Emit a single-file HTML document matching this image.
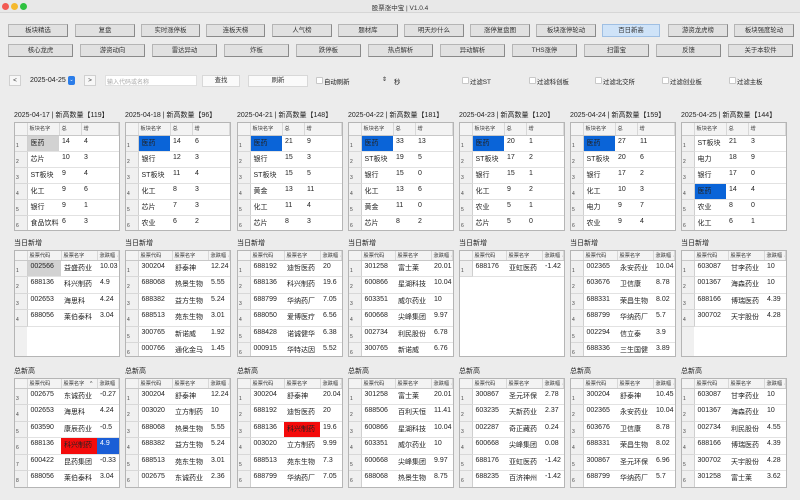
<!DOCTYPE html>
<html><head><meta charset="utf-8">
<style>
*{box-sizing:border-box;margin:0;padding:0}
body{width:800px;height:500px;overflow:hidden;background:#ececec;font-family:"Liberation Sans","Noto Sans CJK SC",sans-serif;color:#222;position:relative}
.tb{position:absolute;left:0;top:0;width:800px;height:13px;background:#e8e8e8;border-bottom:1px solid #d6d6d6}
.tl{position:absolute;top:3px;width:7px;height:7px;border-radius:50%}
.ttl{position:absolute;top:2px;left:0;width:800px;text-align:center;font-size:6.5px;color:#333}
.b{position:absolute;height:13px;background:#e1e1e1;border:1px solid #b5b5b5;border-bottom-color:#8a8a8a;border-right-color:#8a8a8a;font-size:6.4px;text-align:center;line-height:11px;color:#333}
.lbl{position:absolute;font-size:7px;color:#222;white-space:nowrap}
.cb{position:absolute;width:7px;height:7px;background:#fff;border:1px solid #c8c8c8;border-radius:1px}
.tw{position:absolute;width:106px;border:1px solid #b5b5b5;overflow:hidden;background:linear-gradient(90deg,#f0f0f0 0,#f0f0f0 12px,#fff 12px)}
table{border-collapse:collapse;table-layout:fixed;width:104px;font-size:7px}
th{height:12px;background:#f3f3f3;font-weight:normal;font-size:5.2px;text-align:left;padding-left:2px;border-right:1px solid #d8d8d8;border-bottom:1px solid #c8c8c8;color:#333;white-space:nowrap;overflow:hidden}
.m th{height:9px}
td{height:16px;vertical-align:top;padding:2px 0 0 3px;border-bottom:1px solid #e2e2e2;white-space:nowrap;overflow:hidden;background:#fff}
.m td{height:16.5px}
td.n{background:#f0f0f0;border-right:1px solid #cfcfcf;border-bottom:1px solid #d8d8d8;font-size:5px;padding:7px 0 0 1px;color:#444}
.s{background:#0a64d8!important}
.g{background:#d2d2d2!important}
.r{background:#f40b0b!important}
.bl{background:#1b5ed6!important;color:#fff}
</style></head><body>
<div class="tb"></div>
<div class="tl" style="left:2px;background:#f25a52"></div>
<div class="tl" style="left:11px;background:#f5b92d"></div>
<div class="tl" style="left:20px;background:#2fc240"></div>
<div class="ttl">股票涨中宝 | V1.0.4</div>

<div class="b" style="left:8px;top:24px;width:60px">板块精选</div>
<div class="b" style="left:75px;top:24px;width:60px">复盘</div>
<div class="b" style="left:141px;top:24px;width:59px">实时涨停板</div>
<div class="b" style="left:206px;top:24px;width:59px">连板天梯</div>
<div class="b" style="left:272px;top:24px;width:60px">人气榜</div>
<div class="b" style="left:338px;top:24px;width:60px">题材库</div>
<div class="b" style="left:404px;top:24px;width:60px">明天炒什么</div>
<div class="b" style="left:470px;top:24px;width:60px">涨停复盘图</div>
<div class="b" style="left:536px;top:24px;width:60px">板块涨停轮动</div>
<div class="b" style="left:602px;top:24px;width:58px;background:#cfe3f8;border-color:#9fbfe3">百日新高</div>
<div class="b" style="left:668px;top:24px;width:60px">游资龙虎榜</div>
<div class="b" style="left:734px;top:24px;width:60px">板块强度轮动</div>

<div class="b" style="left:8px;top:44px;width:65px">核心龙虎</div>
<div class="b" style="left:80px;top:44px;width:65px">游资动向</div>
<div class="b" style="left:152px;top:44px;width:65px">雷达异动</div>
<div class="b" style="left:224px;top:44px;width:65px">炸板</div>
<div class="b" style="left:296px;top:44px;width:65px">跌停板</div>
<div class="b" style="left:368px;top:44px;width:65px">热点解析</div>
<div class="b" style="left:440px;top:44px;width:65px">异动解析</div>
<div class="b" style="left:512px;top:44px;width:65px">THS涨停</div>
<div class="b" style="left:584px;top:44px;width:65px">扫雷宝</div>
<div class="b" style="left:656px;top:44px;width:65px">反馈</div>
<div class="b" style="left:728px;top:44px;width:65px">关于本软件</div>

<div class="b" style="left:9px;top:75px;width:12px;height:11px;line-height:9px;background:#f7f7f7;border-color:#d0d0d0">&lt;</div>
<div class="lbl" style="left:30px;top:77px">2025-04-25</div>
<div style="position:absolute;left:68px;top:76px;width:7px;height:9px;background:#2b7de9;border-radius:2px;color:#fff;font-size:5px;text-align:center;line-height:9px">⌄</div>
<div class="b" style="left:84px;top:75px;width:12px;height:11px;line-height:9px;background:#f7f7f7;border-color:#d0d0d0">&gt;</div>
<div style="position:absolute;left:105px;top:75px;width:92px;height:11px;background:#fff;border:1px solid #e0e0e0"></div>
<div class="lbl" style="left:107px;top:77px;color:#aaa;font-size:6px">输入代码或名称</div>
<div class="b" style="left:202px;top:75px;width:38px;height:12px;line-height:10px;background:#fafafa;border-color:#d8d8d8">查找</div>
<div class="b" style="left:248px;top:75px;width:60px;height:12px;line-height:10px;background:#fafafa;border-color:#d8d8d8">刷新</div>
<div class="cb" style="left:316px;top:77px"></div><div class="lbl" style="left:324px;top:77px;font-size:6.4px">自动刷新</div>
<div class="lbl" style="left:382px;top:76px;font-size:6px">⇕</div><div class="lbl" style="left:394px;top:77px;font-size:6.4px">秒</div>
<div class="cb" style="left:462px;top:77px"></div><div class="lbl" style="left:470px;top:77px;font-size:6.4px">过滤ST</div>
<div class="cb" style="left:529px;top:77px"></div><div class="lbl" style="left:537px;top:77px;font-size:6.4px">过滤科创板</div>
<div class="cb" style="left:595px;top:77px"></div><div class="lbl" style="left:603px;top:77px;font-size:6.4px">过滤北交所</div>
<div class="cb" style="left:662px;top:77px"></div><div class="lbl" style="left:670px;top:77px;font-size:6.4px">过滤创业板</div>
<div class="cb" style="left:729px;top:77px"></div><div class="lbl" style="left:737px;top:77px;font-size:6.4px">过滤主板</div>

<div class="lbl" style="left:14px;top:110px">2025-04-17 | 新高数量【119】</div>
<div class="lbl" style="left:125px;top:110px">2025-04-18 | 新高数量【96】</div>
<div class="lbl" style="left:237px;top:110px">2025-04-21 | 新高数量【148】</div>
<div class="lbl" style="left:348px;top:110px">2025-04-22 | 新高数量【181】</div>
<div class="lbl" style="left:459px;top:110px">2025-04-23 | 新高数量【120】</div>
<div class="lbl" style="left:570px;top:110px">2025-04-24 | 新高数量【159】</div>
<div class="lbl" style="left:681px;top:110px">2025-04-25 | 新高数量【144】</div>

<div class="tw" style="left:14px;top:122px;height:109px"><table><colgroup><col style="width:12px"><col style="width:32px"><col style="width:22px"><col></colgroup>
<tr><th></th><th>板块名字</th><th>总</th><th>增</th></tr>
<tr><td class="n">1</td><td class="g">医药</td><td>14</td><td>4</td></tr>
<tr><td class="n">2</td><td>芯片</td><td>10</td><td>3</td></tr>
<tr><td class="n">3</td><td>ST板块</td><td>9</td><td>4</td></tr>
<tr><td class="n">4</td><td>化工</td><td>9</td><td>6</td></tr>
<tr><td class="n">5</td><td>银行</td><td>9</td><td>1</td></tr>
<tr><td class="n">6</td><td>食品饮料</td><td>6</td><td>3</td></tr></table></div>

<div class="tw" style="left:125px;top:122px;height:109px"><table><colgroup><col style="width:12px"><col style="width:32px"><col style="width:22px"><col></colgroup>
<tr><th></th><th>板块名字</th><th>总</th><th>增</th></tr>
<tr><td class="n">1</td><td class="s">医药</td><td>14</td><td>6</td></tr>
<tr><td class="n">2</td><td>银行</td><td>12</td><td>3</td></tr>
<tr><td class="n">3</td><td>ST板块</td><td>11</td><td>4</td></tr>
<tr><td class="n">4</td><td>化工</td><td>8</td><td>3</td></tr>
<tr><td class="n">5</td><td>芯片</td><td>7</td><td>3</td></tr>
<tr><td class="n">6</td><td>农业</td><td>6</td><td>2</td></tr></table></div>

<div class="tw" style="left:237px;top:122px;height:109px"><table><colgroup><col style="width:12px"><col style="width:32px"><col style="width:22px"><col></colgroup>
<tr><th></th><th>板块名字</th><th>总</th><th>增</th></tr>
<tr><td class="n">1</td><td class="s">医药</td><td>21</td><td>9</td></tr>
<tr><td class="n">2</td><td>银行</td><td>15</td><td>3</td></tr>
<tr><td class="n">3</td><td>ST板块</td><td>15</td><td>5</td></tr>
<tr><td class="n">4</td><td>黄金</td><td>13</td><td>11</td></tr>
<tr><td class="n">5</td><td>化工</td><td>11</td><td>4</td></tr>
<tr><td class="n">6</td><td>芯片</td><td>8</td><td>3</td></tr></table></div>

<div class="tw" style="left:348px;top:122px;height:109px"><table><colgroup><col style="width:12px"><col style="width:32px"><col style="width:22px"><col></colgroup>
<tr><th></th><th>板块名字</th><th>总</th><th>增</th></tr>
<tr><td class="n">1</td><td class="s">医药</td><td>33</td><td>13</td></tr>
<tr><td class="n">2</td><td>ST板块</td><td>19</td><td>5</td></tr>
<tr><td class="n">3</td><td>银行</td><td>15</td><td>0</td></tr>
<tr><td class="n">4</td><td>化工</td><td>13</td><td>6</td></tr>
<tr><td class="n">5</td><td>黄金</td><td>11</td><td>0</td></tr>
<tr><td class="n">6</td><td>芯片</td><td>8</td><td>2</td></tr></table></div>

<div class="tw" style="left:459px;top:122px;height:109px"><table><colgroup><col style="width:12px"><col style="width:32px"><col style="width:22px"><col></colgroup>
<tr><th></th><th>板块名字</th><th>总</th><th>增</th></tr>
<tr><td class="n">1</td><td class="s">医药</td><td>20</td><td>1</td></tr>
<tr><td class="n">2</td><td>ST板块</td><td>17</td><td>2</td></tr>
<tr><td class="n">3</td><td>银行</td><td>15</td><td>1</td></tr>
<tr><td class="n">4</td><td>化工</td><td>9</td><td>2</td></tr>
<tr><td class="n">5</td><td>农业</td><td>5</td><td>1</td></tr>
<tr><td class="n">6</td><td>芯片</td><td>5</td><td>0</td></tr></table></div>

<div class="tw" style="left:570px;top:122px;height:109px"><table><colgroup><col style="width:12px"><col style="width:32px"><col style="width:22px"><col></colgroup>
<tr><th></th><th>板块名字</th><th>总</th><th>增</th></tr>
<tr><td class="n">1</td><td class="s">医药</td><td>27</td><td>11</td></tr>
<tr><td class="n">2</td><td>ST板块</td><td>20</td><td>6</td></tr>
<tr><td class="n">3</td><td>银行</td><td>17</td><td>2</td></tr>
<tr><td class="n">4</td><td>化工</td><td>10</td><td>3</td></tr>
<tr><td class="n">5</td><td>电力</td><td>9</td><td>7</td></tr>
<tr><td class="n">6</td><td>农业</td><td>9</td><td>4</td></tr></table></div>

<div class="tw" style="left:681px;top:122px;height:109px"><table><colgroup><col style="width:12px"><col style="width:32px"><col style="width:22px"><col></colgroup>
<tr><th></th><th>板块名字</th><th>总</th><th>增</th></tr>
<tr><td class="n">1</td><td>ST板块</td><td>21</td><td>3</td></tr>
<tr><td class="n">2</td><td>电力</td><td>18</td><td>9</td></tr>
<tr><td class="n">3</td><td>银行</td><td>17</td><td>0</td></tr>
<tr><td class="n">4</td><td class="s">医药</td><td>14</td><td>4</td></tr>
<tr><td class="n">5</td><td>农业</td><td>8</td><td>0</td></tr>
<tr><td class="n">6</td><td>化工</td><td>6</td><td>1</td></tr></table></div>

<div class="lbl" style="left:14px;top:238px">当日新增</div>
<div class="lbl" style="left:125px;top:238px">当日新增</div>
<div class="lbl" style="left:237px;top:238px">当日新增</div>
<div class="lbl" style="left:348px;top:238px">当日新增</div>
<div class="lbl" style="left:459px;top:238px">当日新增</div>
<div class="lbl" style="left:570px;top:238px">当日新增</div>
<div class="lbl" style="left:681px;top:238px">当日新增</div>

<div class="tw m" style="left:14px;top:250px;height:107px"><table><colgroup><col style="width:12px"><col style="width:34px"><col style="width:36px"><col></colgroup>
<tr><th></th><th>股票代码</th><th>股票名字</th><th>涨跌幅 ⌄</th></tr>
<tr><td class="n">1</td><td class="g">002566</td><td>益盛药业</td><td>10.03</td></tr>
<tr><td class="n">2</td><td>688136</td><td>科兴制药</td><td>4.9</td></tr>
<tr><td class="n">3</td><td>002653</td><td>海思科</td><td>4.24</td></tr>
<tr><td class="n">4</td><td>688056</td><td>莱伯泰科</td><td>3.04</td></tr></table></div>

<div class="tw m" style="left:125px;top:250px;height:107px"><table><colgroup><col style="width:12px"><col style="width:34px"><col style="width:36px"><col></colgroup>
<tr><th></th><th>股票代码</th><th>股票名字</th><th>涨跌幅 ⌄</th></tr>
<tr><td class="n">1</td><td>300204</td><td>舒泰神</td><td>12.24</td></tr>
<tr><td class="n">2</td><td>688068</td><td>热景生物</td><td>5.55</td></tr>
<tr><td class="n">3</td><td>688382</td><td>益方生物</td><td>5.24</td></tr>
<tr><td class="n">4</td><td>688513</td><td>苑东生物</td><td>3.01</td></tr>
<tr><td class="n">5</td><td>300765</td><td>新诺威</td><td>1.92</td></tr>
<tr><td class="n">6</td><td>000766</td><td>通化金马</td><td>1.45</td></tr></table></div>

<div class="tw m" style="left:237px;top:250px;height:107px"><table><colgroup><col style="width:12px"><col style="width:34px"><col style="width:36px"><col></colgroup>
<tr><th></th><th>股票代码</th><th>股票名字</th><th>涨跌幅 ⌄</th></tr>
<tr><td class="n">1</td><td>688192</td><td>迪哲医药</td><td>20</td></tr>
<tr><td class="n">2</td><td>688136</td><td>科兴制药</td><td>19.6</td></tr>
<tr><td class="n">3</td><td>688799</td><td>华纳药厂</td><td>7.05</td></tr>
<tr><td class="n">4</td><td>688050</td><td>爱博医疗</td><td>6.56</td></tr>
<tr><td class="n">5</td><td>688428</td><td>诺诚健华</td><td>6.38</td></tr>
<tr><td class="n">6</td><td>000915</td><td>华特达因</td><td>5.52</td></tr></table></div>

<div class="tw m" style="left:348px;top:250px;height:107px"><table><colgroup><col style="width:12px"><col style="width:34px"><col style="width:36px"><col></colgroup>
<tr><th></th><th>股票代码</th><th>股票名字</th><th>涨跌幅 ⌄</th></tr>
<tr><td class="n">1</td><td>301258</td><td>富士莱</td><td>20.01</td></tr>
<tr><td class="n">2</td><td>600866</td><td>星湖科技</td><td>10.04</td></tr>
<tr><td class="n">3</td><td>603351</td><td>威尔药业</td><td>10</td></tr>
<tr><td class="n">4</td><td>600668</td><td>尖峰集团</td><td>9.97</td></tr>
<tr><td class="n">5</td><td>002734</td><td>利民股份</td><td>6.78</td></tr>
<tr><td class="n">6</td><td>300765</td><td>新诺威</td><td>6.76</td></tr></table></div>

<div class="tw m" style="left:459px;top:250px;height:107px;background:#fff"><table><colgroup><col style="width:12px"><col style="width:34px"><col style="width:36px"><col></colgroup>
<tr><th></th><th>股票代码</th><th>股票名字</th><th>涨跌幅 ⌄</th></tr>
<tr><td class="n">1</td><td>688176</td><td>亚虹医药</td><td>-1.42</td></tr></table></div>

<div class="tw m" style="left:570px;top:250px;height:107px"><table><colgroup><col style="width:12px"><col style="width:34px"><col style="width:36px"><col></colgroup>
<tr><th></th><th>股票代码</th><th>股票名字</th><th>涨跌幅 ⌄</th></tr>
<tr><td class="n">1</td><td>002365</td><td>永安药业</td><td>10.04</td></tr>
<tr><td class="n">2</td><td>603676</td><td>卫信康</td><td>8.78</td></tr>
<tr><td class="n">3</td><td>688331</td><td>荣昌生物</td><td>8.02</td></tr>
<tr><td class="n">4</td><td>688799</td><td>华纳药厂</td><td>5.7</td></tr>
<tr><td class="n">5</td><td>002294</td><td>信立泰</td><td>3.9</td></tr>
<tr><td class="n">6</td><td>688336</td><td>三生国健</td><td>3.89</td></tr></table></div>

<div class="tw m" style="left:681px;top:250px;height:107px"><table><colgroup><col style="width:12px"><col style="width:34px"><col style="width:36px"><col></colgroup>
<tr><th></th><th>股票代码</th><th>股票名字</th><th>涨跌幅 ⌄</th></tr>
<tr><td class="n">1</td><td>603087</td><td>甘李药业</td><td>10</td></tr>
<tr><td class="n">2</td><td>001367</td><td>海森药业</td><td>10</td></tr>
<tr><td class="n">3</td><td>688166</td><td>博瑞医药</td><td>4.39</td></tr>
<tr><td class="n">4</td><td>300702</td><td>天宇股份</td><td>4.28</td></tr></table></div>

<div class="lbl" style="left:14px;top:366px">总新高</div>
<div class="lbl" style="left:125px;top:366px">总新高</div>
<div class="lbl" style="left:237px;top:366px">总新高</div>
<div class="lbl" style="left:348px;top:366px">总新高</div>
<div class="lbl" style="left:459px;top:366px">总新高</div>
<div class="lbl" style="left:570px;top:366px">总新高</div>
<div class="lbl" style="left:681px;top:366px">总新高</div>

<div class="tw m" style="left:14px;top:378px;height:110px"><table><colgroup><col style="width:12px"><col style="width:34px"><col style="width:36px"><col></colgroup>
<tr><th></th><th>股票代码</th><th>股票名字&nbsp;&nbsp;&nbsp;&nbsp;^</th><th>涨跌幅</th></tr>
<tr><td class="n">3</td><td>002675</td><td>东诚药业</td><td>-0.27</td></tr>
<tr><td class="n">4</td><td>002653</td><td>海思科</td><td>4.24</td></tr>
<tr><td class="n">5</td><td>603590</td><td>康辰药业</td><td>-0.5</td></tr>
<tr><td class="n">6</td><td>688136</td><td class="r">科兴制药</td><td class="bl">4.9</td></tr>
<tr><td class="n">7</td><td>600422</td><td>昆药集团</td><td>-0.33</td></tr>
<tr><td class="n">8</td><td>688056</td><td>莱伯泰科</td><td>3.04</td></tr></table></div>

<div class="tw m" style="left:125px;top:378px;height:110px"><table><colgroup><col style="width:12px"><col style="width:34px"><col style="width:36px"><col></colgroup>
<tr><th></th><th>股票代码</th><th>股票名字</th><th>涨跌幅 ⌄</th></tr>
<tr><td class="n">1</td><td>300204</td><td>舒泰神</td><td>12.24</td></tr>
<tr><td class="n">2</td><td>003020</td><td>立方制药</td><td>10</td></tr>
<tr><td class="n">3</td><td>688068</td><td>热景生物</td><td>5.55</td></tr>
<tr><td class="n">4</td><td>688382</td><td>益方生物</td><td>5.24</td></tr>
<tr><td class="n">5</td><td>688513</td><td>苑东生物</td><td>3.01</td></tr>
<tr><td class="n">6</td><td>002675</td><td>东诚药业</td><td>2.36</td></tr></table></div>

<div class="tw m" style="left:237px;top:378px;height:110px"><table><colgroup><col style="width:12px"><col style="width:34px"><col style="width:36px"><col></colgroup>
<tr><th></th><th>股票代码</th><th>股票名字</th><th>涨跌幅 ⌄</th></tr>
<tr><td class="n">1</td><td>300204</td><td>舒泰神</td><td>20.04</td></tr>
<tr><td class="n">2</td><td>688192</td><td>迪哲医药</td><td>20</td></tr>
<tr><td class="n">3</td><td>688136</td><td class="r">科兴制药</td><td>19.6</td></tr>
<tr><td class="n">4</td><td>003020</td><td>立方制药</td><td>9.99</td></tr>
<tr><td class="n">5</td><td>688513</td><td>苑东生物</td><td>7.3</td></tr>
<tr><td class="n">6</td><td>688799</td><td>华纳药厂</td><td>7.05</td></tr></table></div>

<div class="tw m" style="left:348px;top:378px;height:110px"><table><colgroup><col style="width:12px"><col style="width:34px"><col style="width:36px"><col></colgroup>
<tr><th></th><th>股票代码</th><th>股票名字</th><th>涨跌幅 ⌄</th></tr>
<tr><td class="n">1</td><td>301258</td><td>富士莱</td><td>20.01</td></tr>
<tr><td class="n">2</td><td>688506</td><td>百利天恒</td><td>11.41</td></tr>
<tr><td class="n">3</td><td>600866</td><td>星湖科技</td><td>10.04</td></tr>
<tr><td class="n">4</td><td>603351</td><td>威尔药业</td><td>10</td></tr>
<tr><td class="n">5</td><td>600668</td><td>尖峰集团</td><td>9.97</td></tr>
<tr><td class="n">6</td><td>688068</td><td>热景生物</td><td>8.75</td></tr></table></div>

<div class="tw m" style="left:459px;top:378px;height:110px"><table><colgroup><col style="width:12px"><col style="width:34px"><col style="width:36px"><col></colgroup>
<tr><th></th><th>股票代码</th><th>股票名字</th><th>涨跌幅 ⌄</th></tr>
<tr><td class="n">1</td><td>300867</td><td>圣元环保</td><td>2.78</td></tr>
<tr><td class="n">2</td><td>603235</td><td>天新药业</td><td>2.37</td></tr>
<tr><td class="n">3</td><td>002287</td><td>奇正藏药</td><td>0.24</td></tr>
<tr><td class="n">4</td><td>600668</td><td>尖峰集团</td><td>0.08</td></tr>
<tr><td class="n">5</td><td>688176</td><td>亚虹医药</td><td>-1.42</td></tr>
<tr><td class="n">6</td><td>688235</td><td>百济神州</td><td>-1.42</td></tr></table></div>

<div class="tw m" style="left:570px;top:378px;height:110px"><table><colgroup><col style="width:12px"><col style="width:34px"><col style="width:36px"><col></colgroup>
<tr><th></th><th>股票代码</th><th>股票名字</th><th>涨跌幅 ⌄</th></tr>
<tr><td class="n">1</td><td>300204</td><td>舒泰神</td><td>10.45</td></tr>
<tr><td class="n">2</td><td>002365</td><td>永安药业</td><td>10.04</td></tr>
<tr><td class="n">3</td><td>603676</td><td>卫信康</td><td>8.78</td></tr>
<tr><td class="n">4</td><td>688331</td><td>荣昌生物</td><td>8.02</td></tr>
<tr><td class="n">5</td><td>300867</td><td>圣元环保</td><td>6.96</td></tr>
<tr><td class="n">6</td><td>688799</td><td>华纳药厂</td><td>5.7</td></tr></table></div>

<div class="tw m" style="left:681px;top:378px;height:110px"><table><colgroup><col style="width:12px"><col style="width:34px"><col style="width:36px"><col></colgroup>
<tr><th></th><th>股票代码</th><th>股票名字</th><th>涨跌幅 ⌄</th></tr>
<tr><td class="n">1</td><td>603087</td><td>甘李药业</td><td>10</td></tr>
<tr><td class="n">2</td><td>001367</td><td>海森药业</td><td>10</td></tr>
<tr><td class="n">3</td><td>002734</td><td>利民股份</td><td>4.55</td></tr>
<tr><td class="n">4</td><td>688166</td><td>博瑞医药</td><td>4.39</td></tr>
<tr><td class="n">5</td><td>300702</td><td>天宇股份</td><td>4.28</td></tr>
<tr><td class="n">6</td><td>301258</td><td>富士莱</td><td>3.62</td></tr></table></div>
</body></html>
